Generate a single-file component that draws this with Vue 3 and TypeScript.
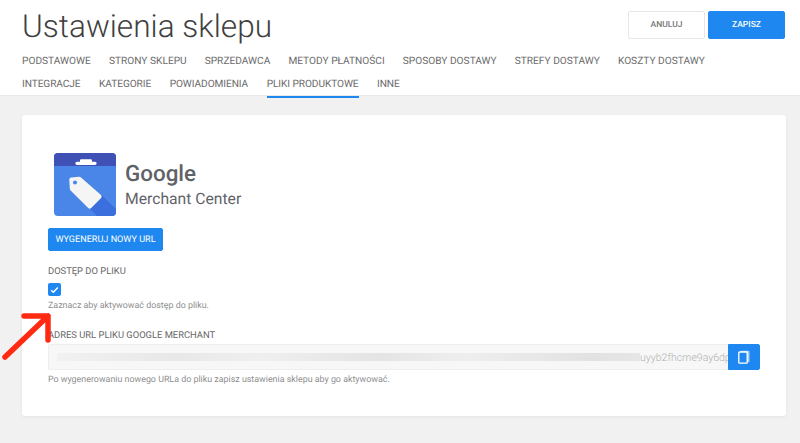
<script setup lang="ts">
const tabRows: string[][] = [
  ['PODSTAWOWE', 'STRONY SKLEPU', 'SPRZEDAWCA', 'METODY PŁATNOŚCI', 'SPOSOBY DOSTAWY', 'STREFY DOSTAWY', 'KOSZTY DOSTAWY'],
  ['INTEGRACJE', 'KATEGORIE', 'POWIADOMIENIA', 'PLIKI PRODUKTOWE', 'INNE'],
]
const activeTab = 'PLIKI PRODUKTOWE'
</script>

<template>
  <div class="page">
    <header class="header">
      <div class="top">
        <h1 class="title">Ustawienia sklepu</h1>
        <div class="actions">
          <button class="btn btn-cancel">ANULUJ</button>
          <button class="btn btn-save">ZAPISZ</button>
        </div>
      </div>
      <nav class="tabs">
        <div v-for="(row, i) in tabRows" :key="i" class="tab-row">
          <span v-for="t in row" :key="t" class="tab" :class="{ active: t === activeTab }">{{ t }}</span>
        </div>
      </nav>
    </header>

    <main class="main">
      <section class="card">
        <div class="logo">
          <svg class="logo-icon" width="62" height="63" viewBox="0 0 62 63">
            <defs>
              <clipPath id="logoClip"><rect width="62" height="63" rx="4" /></clipPath>
            </defs>
            <g clip-path="url(#logoClip)">
              <rect width="62" height="63" fill="#4a86e8" />
              <rect width="62" height="13" fill="#3f51b5" />
              <polygon points="47.7,42 62,56 62,63 43,63 35.3,55.3" fill="#3b6fde" />
              <path d="M26 8.7 V7.4 a1.1 1.1 0 0 1 1.1 -1.1 h9.8 a1.1 1.1 0 0 1 1.1 1.1 V8.7 h3 a1.65 1.65 0 0 1 0 3.3 h-18 a1.65 1.65 0 0 1 0 -3.3 z" fill="#fff" />
              <path d="M17.5 24.5 L25 23.8 a2.6 2.6 0 0 1 2 .7 L47 42 a2.2 2.2 0 0 1 .1 3 L37.2 54.9 a2.2 2.2 0 0 1 -3 .1 L16.6 37.4 a2.6 2.6 0 0 1 -.8 -1.9 L15.3 26.6 a2.1 2.1 0 0 1 2.2 -2.1 z" fill="#f5f5f5" />
              <circle cx="21" cy="29.5" r="2" fill="#4a86e8" />
            </g>
          </svg>
          <div class="logo-text">
            <div class="logo-google">Google</div>
            <div class="logo-merchant">Merchant Center</div>
          </div>
        </div>

        <button class="btn btn-generate">WYGENERUJ NOWY URL</button>

        <label class="field-label access-label">DOSTĘP DO PLIKU</label>
        <span class="checkbox">
          <svg width="9" height="8" viewBox="0 0 9 8">
            <path d="M1.2 4.2 L3.4 6.3 L7.8 1.6" fill="none" stroke="#fff" stroke-width="1.4" />
          </svg>
        </span>
        <p class="hint hint-access">Zaznacz aby aktywować dostęp do pliku.</p>

        <label class="field-label url-label">ADRES URL PLIKU GOOGLE MERCHANT</label>
        <div class="url-row">
          <div class="url-input">
            <span class="redacted"></span>
            <span class="url-tail">uyyb2fhcme9ay6dp5</span>
          </div>
          <button class="btn-copy" aria-label="Kopiuj">
            <svg width="12" height="14" viewBox="0 0 12 14">
              <rect x="2.5" y="0.7" width="9" height="11.6" rx="1" fill="#a9c9f7" />
              <rect x="0.8" y="2" width="8.4" height="11.2" rx="0.8" fill="#1e88f0" stroke="#fff" stroke-width="1.3" />
            </svg>
          </button>
        </div>
        <p class="hint hint-url">Po wygenerowaniu nowego URLa do pliku zapisz ustawienia sklepu aby go aktywować.</p>
      </section>
    </main>

    <svg class="arrow" width="56" height="52" viewBox="0 0 56 52">
      <path d="M3 48 L46 7 M22 7 H46 V31" fill="none" stroke="#ff2a12" stroke-width="5.5" stroke-linecap="round" stroke-linejoin="round" />
    </svg>
  </div>
</template>

<style>
html, body { margin: 0; padding: 0; background: #f1f1f1; }
</style>

<style scoped>
.page {
  position: relative;
  width: 800px;
  height: 443px;
  overflow: hidden;
  background: #f1f1f1;
  font-family: Roboto, "Liberation Sans", sans-serif;
  text-rendering: geometricPrecision;
}
.header {
  box-sizing: border-box;
  height: 96px;
  padding: 0 15px 0 22px;
  background: #fff;
  border-bottom: 1px solid #e9e9e9;
}
.top {
  display: flex;
  justify-content: space-between;
  height: 53px;
  padding-top: 11px;
  box-sizing: border-box;
}
.title {
  margin: -3px 0 0;
  font-size: 31.6px;
  line-height: 38px;
  font-weight: 300;
  color: #3f3f3f;
}
.actions { display: flex; gap: 3px; }
.btn {
  font-family: inherit;
  font-size: 8.5px;
  font-weight: 500;
  border-radius: 2px;
  cursor: pointer;
  text-rendering: geometricPrecision;
}
.btn-cancel, .btn-save { width: 77px; height: 28px; padding: 0; }
.btn-cancel { background: #fff; border: 1px solid #e6e6e6; color: #767676; }
.btn-save { background: #1e88f0; border: 1px solid #1e88f0; color: #fff; }
.tabs { display: flex; flex-direction: column; }
.tab-row { display: flex; gap: 18px; height: 22.5px; letter-spacing: 0.025px; }
.tab-row:last-child { gap: 18.5px; letter-spacing: -0.07px; }
.tab {
  box-sizing: border-box;
  height: 22.5px;
  line-height: 18px;
  font-size: 10.15px;
  color: #6b6b6b;
  white-space: nowrap;
}
.tab.active { border-bottom: 2px solid #1e88f0; }
.main { padding: 19px 14px 0 22px; }
.card {
  box-sizing: border-box;
  height: 301px;
  padding: 38px 26px 0;
  background: #fff;
  border-radius: 3px;
  box-shadow: 0 1px 3px rgba(0, 0, 0, 0.06);
}
.logo { display: flex; align-items: center; gap: 9px; margin-left: 6px; height: 63px; }
.logo-icon { display: block; flex: none; }
.logo-text { color: #5f6368; }
.logo-google { font-size: 22.4px; line-height: 26px; font-weight: 500; position: relative; top: 1px; }
.logo-merchant { font-size: 15.7px; line-height: 20px; margin-top: 3px; font-weight: 400; }
.btn-generate {
  display: block;
  width: 115px;
  height: 23px;
  margin-top: 12px;
  padding: 0;
  font-size: 9.1px;
  font-weight: 400;
  background: #1e88f0;
  border: 1px solid #1e88f0;
  color: #fff;
}
.field-label {
  display: block;
  font-size: 9.4px;
  line-height: 12px;
  color: #666;
}
.access-label { margin-top: 15px; }
.checkbox {
  display: flex;
  align-items: center;
  justify-content: center;
  width: 13px;
  height: 13px;
  margin-top: 5px;
  background: #1e88f0;
  border-radius: 2px;
}
.hint {
  margin: 0;
  font-size: 8.9px;
  line-height: 12px;
  color: #8f8f8f;
}
.hint-access { margin-top: 4px; }
.url-label { margin-top: 18px; }
.url-row { display: flex; margin-top: 2px; height: 26px; }
.url-input {
  box-sizing: border-box;
  flex: 1;
  min-width: 0;
  display: flex;
  align-items: center;
  padding-left: 8px;
  overflow: hidden;
  background: #f7f7f7;
  border: 1px solid #eee;
  border-right: 0;
  border-radius: 2px 0 0 2px;
}
.redacted {
  flex: none;
  width: 583px;
  height: 8px;
  background: linear-gradient(90deg, #f1f1f1, #e8e8e8 20%, #efefef 35%, #e4e4e4 55%, #eeeeee 70%, #e2e2e2 92%, #e6e6e6);
}
.url-tail {
  flex: none;
  font-size: 10.5px;
  font-weight: 300;
  color: #b0b0b0;
  white-space: nowrap;
}
.btn-copy {
  box-sizing: border-box;
  flex: none;
  display: flex;
  align-items: center;
  justify-content: center;
  width: 32px;
  height: 26px;
  padding: 0;
  background: #1e88f0;
  border: 1px solid #1e88f0;
  border-radius: 0 2px 2px 0;
}
.hint-url { margin-top: 4px; }
.arrow {
  position: absolute;
  left: 2px;
  top: 309px;
}
</style>
